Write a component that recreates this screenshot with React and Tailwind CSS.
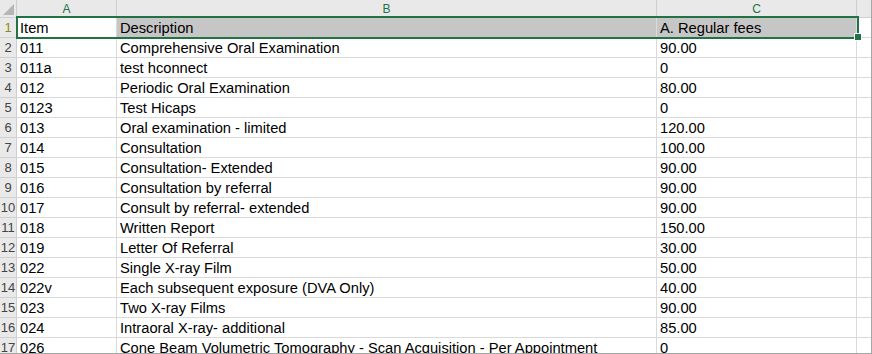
import React from "react";

const rows = [
  ["Item", "Description", "A. Regular fees"],
  ["011", "Comprehensive Oral Examination", "90.00"],
  ["011a", "test hconnect", "0"],
  ["012", "Periodic Oral Examination", "80.00"],
  ["0123", "Test Hicaps", "0"],
  ["013", "Oral examination - limited", "120.00"],
  ["014", "Consultation", "100.00"],
  ["015", "Consultation- Extended", "90.00"],
  ["016", "Consultation by referral", "90.00"],
  ["017", "Consult by referral- extended", "90.00"],
  ["018", "Written Report", "150.00"],
  ["019", "Letter Of Referral", "30.00"],
  ["022", "Single X-ray Film", "50.00"],
  ["022v", "Each subsequent exposure (DVA Only)", "40.00"],
  ["023", "Two X-ray Films", "90.00"],
  ["024", "Intraoral X-ray- additional", "85.00"],
  ["026", "Cone Beam Volumetric Tomography - Scan Acquisition - Per Appointment", "0"],
];

export default function App() {
  return (
    <div className="relative w-[872px] h-[354px] overflow-hidden bg-white border-r border-b border-[#a6a6a6] font-['Liberation_Sans',Arial,sans-serif]">
      <div className="grid grid-cols-[17px_100px_540px_200px_14px] auto-rows-[20px] grid-rows-[18px]">
        <div className="relative bg-[#e9e9e9] border-r border-b border-[#cfcfcf]">
          <svg className="absolute right-[2px] bottom-[2px]" width="11" height="11" viewBox="0 0 11 11">
            <polygon points="11,0 11,11 0,11" fill="#b5b5b5" />
          </svg>
        </div>
        {["A", "B", "C"].map((c) => (
          <div key={c} className="bg-[#e9e9e9] border-r border-b border-[#cfcfcf] flex items-center justify-center text-[12px] text-[#217346] leading-none pt-[1px]">
            {c}
          </div>
        ))}
        <div className="bg-[#e9e9e9] border-b border-[#cfcfcf]" />

        {rows.map((r, i) => {
          const sel = i === 0;
          return (
            <React.Fragment key={i}>
              <div className={`bg-[#e9e9e9] border-r border-b border-[#cfcfcf] flex items-end justify-center text-[13px] leading-none pb-[3px] overflow-hidden whitespace-nowrap ${sel ? "text-[#8a8a1f]" : "text-[#444444]"}`}>
                {i + 1}
              </div>
              <div className="border-r border-b border-[#dadada] flex items-end pl-[3px] pb-[1px] text-[14.7px] leading-none text-black whitespace-nowrap">
                {r[0]}
              </div>
              <div className={`border-r border-b border-[#dadada] flex items-end pl-[3px] pb-[1px] text-[14.7px] leading-none text-black whitespace-nowrap ${sel ? "bg-[#c6c6c6]" : ""}`}>
                {r[1]}
              </div>
              <div className={`border-r border-b border-[#dadada] flex items-end pl-[3px] pb-[1px] text-[14.7px] leading-none text-black whitespace-nowrap ${sel ? "bg-[#c6c6c6]" : ""}`}>
                {r[2]}
              </div>
              <div className="border-b border-[#dadada]" />
            </React.Fragment>
          );
        })}
      </div>
      <div className="absolute left-[16px] top-[16px] w-[843px] h-[23px] border-2 border-[#217346] pointer-events-none" />
      <div className="absolute left-[854px] top-[33px] w-[8px] h-[8px] bg-[#217346] border border-white" />
    </div>
  );
}
